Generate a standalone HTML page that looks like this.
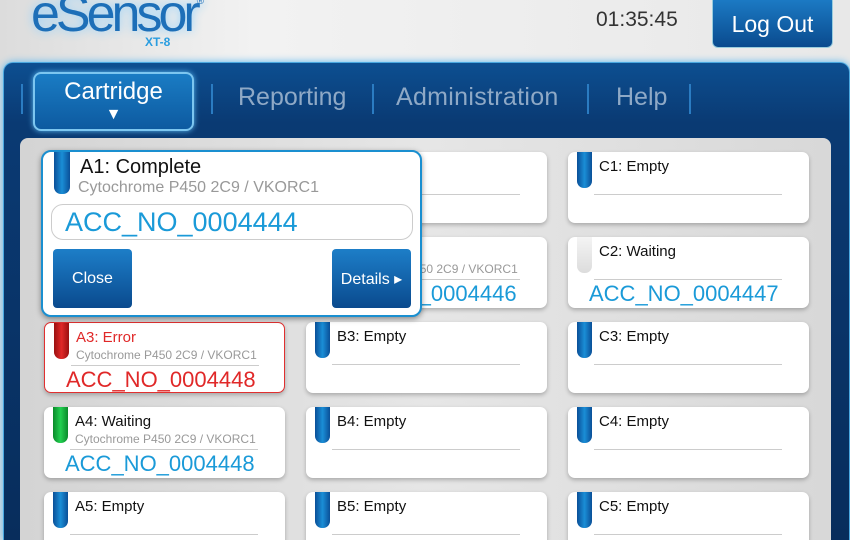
<!DOCTYPE html>
<html><head><meta charset="utf-8"><style>
*{margin:0;padding:0;box-sizing:border-box}
html{width:850px;height:540px;overflow:hidden}
body{width:850px;height:540px;overflow:hidden;position:relative;font-family:"Liberation Sans",sans-serif;background:linear-gradient(90deg,#dcdcdc,#f2f2f2 30%,#e8e8e8)}
.abs{position:absolute}
.nav{left:3px;top:62px;width:847px;height:478px;background:linear-gradient(#0d4f91,#0a3a73 60px,#082d5c);border-radius:10px 10px 0 0;box-shadow:0 0 8px #5ab8f0;border:1px solid #4aa8e0;border-bottom:none}
.panel{left:20px;top:138px;width:811px;height:402px;background:linear-gradient(90deg,#d4d4d4,#e6e6e6 50%,#d8d8d8);border-radius:8px 8px 0 0}
.sep{width:2px;height:30px;top:84px;background:#2b7cc2}
.ni{top:83px;font-size:25px;color:#8fa9c6}
.card{width:241px;height:71px;background:#fff;border-radius:7px;box-shadow:0 2px 4px rgba(0,0,0,.25)}
.pill{position:absolute;left:9px;top:0;width:15px;height:36px;border-radius:0 0 7px 7px;background:linear-gradient(90deg,#0a4f98,#1a8ed6,#0a4f98)}
.t{position:absolute;left:31px;top:6px;font-size:15px;color:#111}
.s{position:absolute;left:31px;top:25px;font-size:12px;color:#999}
.ln{position:absolute;left:26px;width:188px;top:42px;height:1px;background:#ccc}
.acc{position:absolute;left:21px;top:44px;font-size:22px;color:#1a9ad8}
.btn{background:linear-gradient(#1d7ec8,#0a4a8e);border-radius:4px;color:#fff;font-size:16px;display:flex;align-items:center;justify-content:center}
</style></head><body>
<div class="abs" style="left:31px;top:-16px;font-size:52px;color:#1d6fb8;letter-spacing:-4px;text-shadow:0 0 10px #8cd0ff">eSensor<span style="font-size:10px;vertical-align:top;letter-spacing:0;position:relative;top:12px">®</span></div>
<div class="abs" style="left:145px;top:35px;font-size:12px;font-weight:bold;color:#2a9de0">XT-8</div>
<div class="abs" style="left:596px;top:8px;font-size:21px;color:#333">01:35:45</div>
<div class="abs btn" style="left:712px;top:-5px;width:121px;height:53px;border:1px solid #9cd;font-size:23px;border-radius:6px;padding-top:5px">Log Out</div>
<div class="abs nav"></div>
<div class="abs" style="left:33px;top:72px;width:161px;height:59px;border:2px solid #7cc6f0;border-radius:8px;background:linear-gradient(#1a7cc4,#0d5aa0);box-shadow:0 0 6px #5ab8f0;color:#fff;text-align:center;font-size:24px;padding-top:4px">Cartridge<div style="font-size:16px;line-height:18px">▼</div></div>
<div class="abs sep" style="left:21px"></div><div class="abs sep" style="left:211px"></div><div class="abs sep" style="left:372px"></div><div class="abs sep" style="left:587px"></div><div class="abs sep" style="left:689px"></div>
<div class="abs ni" style="left:238px">Reporting</div>
<div class="abs ni" style="left:396px;letter-spacing:.3px">Administration</div>
<div class="abs ni" style="left:616px">Help</div>
<div class="abs panel"></div>

<div class="abs card" style="left:306px;top:152px"><div class="ln"></div></div>
<div class="abs card" style="left:568px;top:152px"><div class="pill"></div><div class="t">C1: Empty</div><div class="ln"></div></div>
<div class="abs card" style="left:306px;top:237px"><div class="s">Cytochrome P450 2C9 / VKORC1</div><div class="ln"></div><div class="acc">ACC_NO_0004446</div></div>
<div class="abs card" style="left:568px;top:237px"><div class="pill" style="background:linear-gradient(#f4f4f4,#dcdcdc)"></div><div class="t">C2: Waiting</div><div class="ln"></div><div class="acc">ACC_NO_0004447</div></div>

<div class="abs card" style="left:44px;top:322px;border:1px solid #e03030"><div class="pill" style="background:linear-gradient(90deg,#9a1010,#e02828,#9a1010)"></div><div class="t" style="color:#e02828">A3: Error</div><div class="s">Cytochrome P450 2C9 / VKORC1</div><div class="ln"></div><div class="acc" style="color:#e02828">ACC_NO_0004448</div></div>
<div class="abs card" style="left:306px;top:322px"><div class="pill"></div><div class="t">B3: Empty</div><div class="ln"></div></div>
<div class="abs card" style="left:568px;top:322px"><div class="pill"></div><div class="t">C3: Empty</div><div class="ln"></div></div>

<div class="abs card" style="left:44px;top:407px"><div class="pill" style="background:linear-gradient(90deg,#0a8a2a,#22d050,#0a8a2a)"></div><div class="t">A4: Waiting</div><div class="s">Cytochrome P450 2C9 / VKORC1</div><div class="ln"></div><div class="acc">ACC_NO_0004448</div></div>
<div class="abs card" style="left:306px;top:407px"><div class="pill"></div><div class="t">B4: Empty</div><div class="ln"></div></div>
<div class="abs card" style="left:568px;top:407px"><div class="pill"></div><div class="t">C4: Empty</div><div class="ln"></div></div>

<div class="abs card" style="left:44px;top:492px"><div class="pill"></div><div class="t">A5: Empty</div><div class="ln"></div></div>
<div class="abs card" style="left:306px;top:492px"><div class="pill"></div><div class="t">B5: Empty</div><div class="ln"></div></div>
<div class="abs card" style="left:568px;top:492px"><div class="pill"></div><div class="t">C5: Empty</div><div class="ln"></div></div>

<div class="abs" style="left:41px;top:150px;width:381px;height:167px;background:#fff;border:2px solid #1a8fd0;border-radius:10px;box-shadow:0 2px 6px rgba(0,0,0,.4)">
<div style="position:absolute;left:11px;top:0;width:16px;height:42px;border-radius:0 0 7px 7px;background:linear-gradient(90deg,#0a4f98,#1a8ed6,#0a4f98)"></div>
<div style="position:absolute;left:37px;top:4px;font-size:20px;color:#111">A1: Complete</div>
<div style="position:absolute;left:35px;top:27px;font-size:16px;color:#999">Cytochrome P450 2C9 / VKORC1</div>
<div style="position:absolute;left:8px;top:52px;width:362px;height:36px;border:1px solid #ccc;border-radius:12px"></div>
<div style="position:absolute;left:22px;top:55px;font-size:27px;color:#1a9ad8">ACC_NO_0004444</div>
<div class="btn" style="position:absolute;left:10px;top:97px;width:79px;height:59px">Close</div>
<div class="btn" style="position:absolute;left:289px;top:97px;width:79px;height:59px">Details ▸</div>
</div>
</body></html>
